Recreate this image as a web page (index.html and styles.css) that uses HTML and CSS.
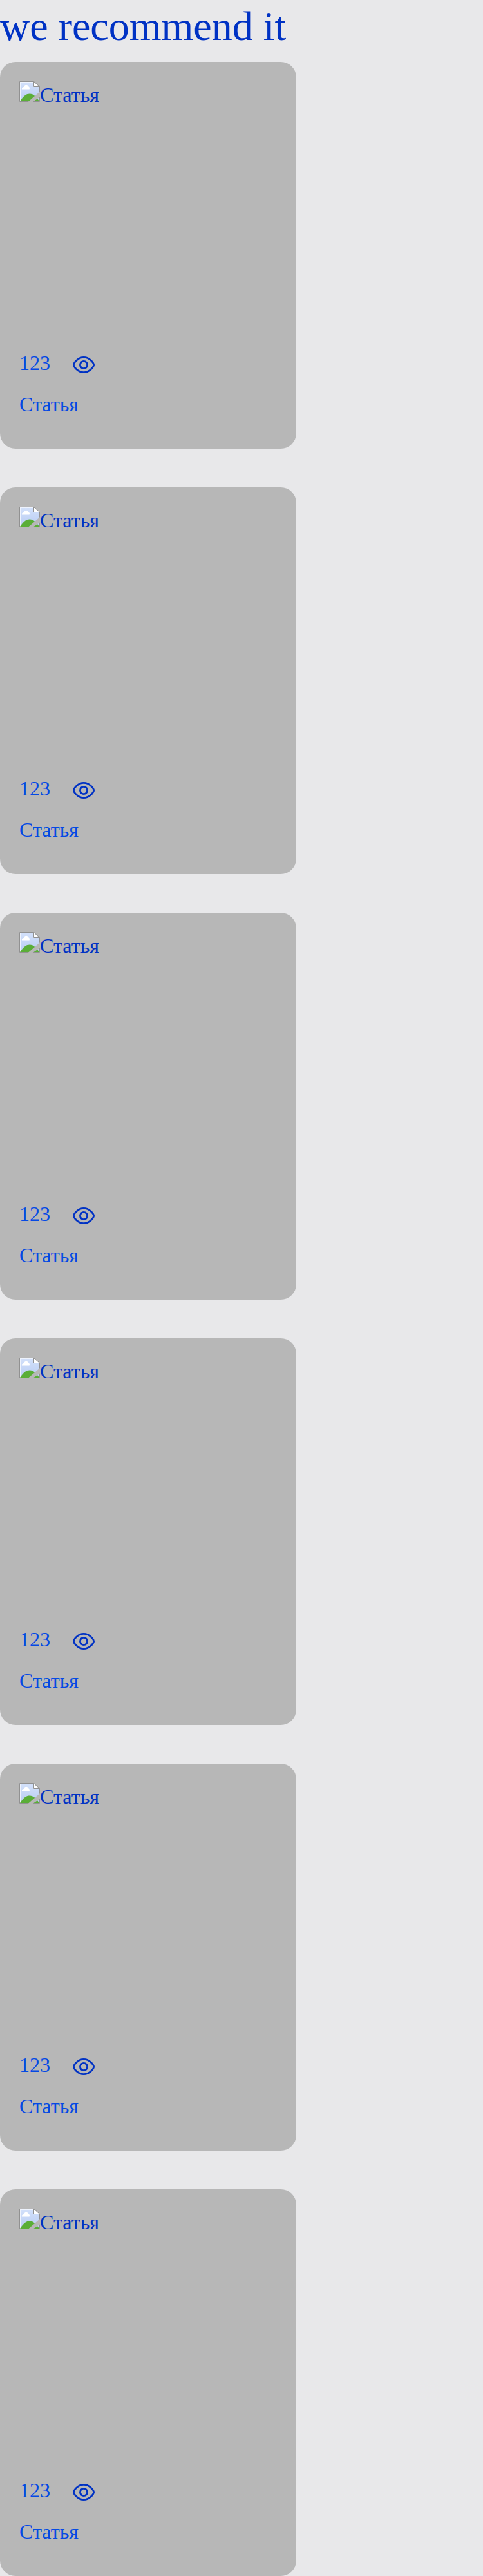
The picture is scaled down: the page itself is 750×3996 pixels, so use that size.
FILE: index.html
```html
<!DOCTYPE html>
<html lang="ru">
<head>
<meta charset="utf-8">
<title>we recommend it</title>
<link rel="stylesheet" href="styles.css">
</head>
<body>
<svg class="sprite" aria-hidden="true">
  <defs>
    <linearGradient id="sky" x1="0" y1="0" x2="0" y2="1">
      <stop offset="0" stop-color="#d2e0fa"/>
      <stop offset="1" stop-color="#b9cdf3"/>
    </linearGradient>
  </defs>
  <symbol id="picture" viewBox="0 0 32 32">
    <path d="M.5.5H22.5L31.5 8.5V31.5H.5Z" fill="#eef3fd"/>
    <path d="M2 2H21V9H30V30H2Z" fill="url(#sky)"/>
    <path d="M4 12.5C3.5 10.5 5 9 7 9C8 5 13 4.5 14.5 8.5C16 9 16.5 11 15.5 12.5Z" fill="#fff"/>
    <path d="M1 31C7 22 11 19.5 16 19.5C22 19.5 26 24 31 31Z" fill="#5aae37"/>
    <path d="M.5 31.5V.5H22.5L31.5 8.5V31.5H.5" fill="none" stroke="#919191"/>
    <path d="M22.5.5V8.5H31.5Z" fill="#fff" stroke="#919191"/>
    <path d="M13.5 32L32 16V24.500L21 32Z" fill="#b7b7b7"/>
  </symbol>
  <symbol id="eye" viewBox="0 0 40 40">
    <path d="M4.400 20C4.400 17.500 10.600 8.400 20 8.400S35.600 17.500 35.600 20S29.400 31.600 20 31.600S4.400 22.500 4.400 20Z"/>
    <circle cx="20" cy="20" r="5.600"/>
  </symbol>
</svg>
<h1 class="heading">we recommend it</h1>
<main class="list">
  <article class="card">
    <div class="cover"><svg class="picture"><use href="#picture"/></svg><span>Статья</span></div>
    <div class="views"><span>123</span><svg class="eye"><use href="#eye"/></svg></div>
    <div class="title">Статья</div>
  </article>
  <article class="card">
    <div class="cover"><svg class="picture"><use href="#picture"/></svg><span>Статья</span></div>
    <div class="views"><span>123</span><svg class="eye"><use href="#eye"/></svg></div>
    <div class="title">Статья</div>
  </article>
  <article class="card">
    <div class="cover"><svg class="picture"><use href="#picture"/></svg><span>Статья</span></div>
    <div class="views"><span>123</span><svg class="eye"><use href="#eye"/></svg></div>
    <div class="title">Статья</div>
  </article>
  <article class="card">
    <div class="cover"><svg class="picture"><use href="#picture"/></svg><span>Статья</span></div>
    <div class="views"><span>123</span><svg class="eye"><use href="#eye"/></svg></div>
    <div class="title">Статья</div>
  </article>
  <article class="card">
    <div class="cover"><svg class="picture"><use href="#picture"/></svg><span>Статья</span></div>
    <div class="views"><span>123</span><svg class="eye"><use href="#eye"/></svg></div>
    <div class="title">Статья</div>
  </article>
  <article class="card">
    <div class="cover"><svg class="picture"><use href="#picture"/></svg><span>Статья</span></div>
    <div class="views"><span>123</span><svg class="eye"><use href="#eye"/></svg></div>
    <div class="title">Статья</div>
  </article>
</main>
</body>
</html>
```
FILE: styles.css
```css
* {
  box-sizing: border-box;
}

body {
  margin: 0;
  background: #e8e8ea;
  color: #0032c4;
  font: 32px/37px "Liberation Serif", serif;
}

.sprite {
  display: block;
  width: 0;
  height: 0;
}

.heading {
  margin: 0;
  height: 96px;
  font-size: 64px;
  font-weight: 400;
  line-height: 81px;
}

.list {
  display: flex;
  flex-direction: column;
  gap: 60px;
}

.card {
  display: flex;
  flex-direction: column;
  width: 460px;
  height: 600px;
  padding: 30px;
  border-radius: 24px;
  background: #b7b7b7;
}

.cover {
  display: flex;
  align-items: flex-start;
  height: 419px;
}

.cover span {
  padding-top: 3px;
}

.picture {
  width: 32px;
  height: 32px;
}

.views {
  display: flex;
  gap: 32px;
  height: 64px;
  color: #0449e4;
}

.eye {
  width: 40px;
  height: 40px;
  margin-top: 1px;
  fill: none;
  stroke: #0032c4;
  stroke-width: 2.8;
}

.title {
  color: #0449e4;
}
```
